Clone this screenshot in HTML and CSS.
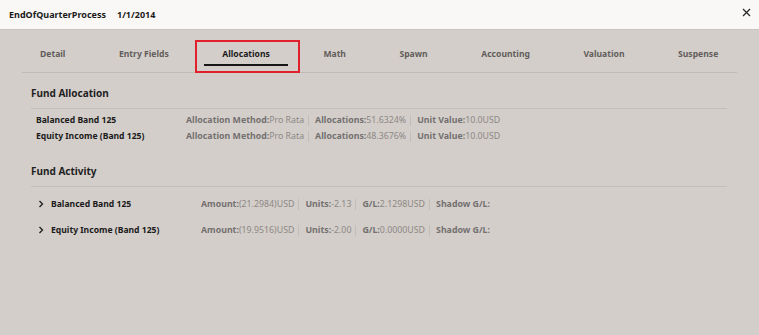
FILE: index.html
```html
<!DOCTYPE html>
<html>
<head>
<meta charset="utf-8">
<link rel="stylesheet" href="styles.css">
</head>
<body>
<div class="dialog">
  <header class="header">
    <div class="title"><span class="name">EndOfQuarterProcess</span><span class="date">1/1/2014</span></div>
    <button class="close" aria-label="Close">
      <svg width="9" height="9" viewBox="0 0 9 9"><path d="M1 1L8 8M8 1L1 8" stroke="#2a2a2a" stroke-width="1.3" fill="none"/></svg>
    </button>
  </header>
  <main class="body">
    <nav class="tabs">
      <div class="tab">Detail</div>
      <div class="tab">Entry Fields</div>
      <div class="tab active">Allocations</div>
      <div class="tab">Math</div>
      <div class="tab">Spawn</div>
      <div class="tab">Accounting</div>
      <div class="tab">Valuation</div>
      <div class="tab">Suspense</div>
    </nav>

    <section class="section">
      <h2 class="section-title">Fund Allocation</h2>
      <div class="alloc-list">
        <div class="alloc-row">
          <div class="fund">Balanced Band 125</div>
          <div class="details">
            <span class="item"><b>Allocation Method:</b>Pro Rata</span>
            <span class="item"><b>Allocations:</b>51.6324%</span>
            <span class="item"><b>Unit Value:</b>10.0USD</span>
          </div>
        </div>
        <div class="alloc-row">
          <div class="fund">Equity Income (Band 125)</div>
          <div class="details">
            <span class="item"><b>Allocation Method:</b>Pro Rata</span>
            <span class="item"><b>Allocations:</b>48.3676%</span>
            <span class="item"><b>Unit Value:</b>10.0USD</span>
          </div>
        </div>
      </div>
    </section>

    <section class="section activity">
      <h2 class="section-title">Fund Activity</h2>
      <div class="act-list">
        <div class="act-row">
          <svg class="chev" width="6" height="8" viewBox="0 0 6 8"><path d="M1.5 1L4.5 4L1.5 7" stroke="#1e1e1e" stroke-width="1.3" fill="none"/></svg>
          <div class="fund">Balanced Band 125</div>
          <div class="details">
            <span class="item"><b>Amount:</b>(21.2984)USD</span>
            <span class="item"><b>Units:</b>-2.13</span>
            <span class="item"><b>G/L:</b>2.1298USD</span>
            <span class="item"><b>Shadow G/L:</b></span>
          </div>
        </div>
        <div class="act-row">
          <svg class="chev" width="6" height="8" viewBox="0 0 6 8"><path d="M1.5 1L4.5 4L1.5 7" stroke="#1e1e1e" stroke-width="1.3" fill="none"/></svg>
          <div class="fund">Equity Income (Band 125)</div>
          <div class="details">
            <span class="item"><b>Amount:</b>(19.9516)USD</span>
            <span class="item"><b>Units:</b>-2.00</span>
            <span class="item"><b>G/L:</b>0.0000USD</span>
            <span class="item"><b>Shadow G/L:</b></span>
          </div>
        </div>
      </div>
    </section>
  </main>
</div>
</body>
</html>
```
FILE: styles.css
```css
* { box-sizing: border-box; }
html, body { margin: 0; padding: 0; }
body {
  width: 759px;
  height: 335px;
  overflow: hidden;
  background: #d3ceca;
  font-family: "Noto Sans", "Open Sans", sans-serif;
  color: #1b1b1b;
}
.dialog { display: flex; flex-direction: column; height: 335px; }
.header {
  height: 30px;
  background: #f9f8f6;
  border-bottom: 1px solid #c9c4c0;
  display: flex;
  align-items: center;
  justify-content: space-between;
  padding: 0 8px 0 9px;
}
.title { display: flex; gap: 11px; font-size: 9px; font-weight: 700; color: #1b1b1b; }
.close { background: none; border: 0; padding: 0; display: flex; margin-top: -4px; }
.body { flex: 1; padding: 0 22px; }
.tabs {
  display: flex;
  align-items: stretch;
  height: 43px;
  border-bottom: 1px solid #c0bbb7;
  padding-left: 18px;
  gap: 53.5px;
}
.tab {
  position: relative;
  display: flex;
  align-items: center;
  font-size: 8.6px;
  font-weight: 700;
  color: #625d5a;
  padding-top: 6px;
}
.tab.active { color: #1b1b1b; }
.tab.active::after {
  content: "";
  position: absolute;
  left: -18px;
  right: -18px;
  bottom: 6px;
  height: 2px;
  background: #161616;
}
.tab.active::before {
  content: "";
  position: absolute;
  left: -27px;
  right: -30px;
  top: 10px;
  bottom: -1px;
  border: 2px solid #e0202a;
}
.section { padding: 0 10px 0 9px; }
.section-title {
  margin: 0;
  font-size: 10px;
  font-weight: 700;
  color: #1f1f1f;
  height: 36px;
  display: flex;
  align-items: center;
  border-bottom: 1px solid #c3beba;
  padding-top: 4px;
}
.alloc-list { padding: 3px 0 0 5px; }
.alloc-row { display: flex; height: 16px; align-items: center; }
.alloc-row .fund { width: 150px; font-size: 8.6px; font-weight: 700; color: #1b1b1b; }
.details { display: flex; align-items: center; font-size: 8.8px; color: #8d8884; }
.details b { font-weight: 700; color: #747070; }
.item { padding: 0 4px 0 6px; border-left: 1px solid #c2bdb9; line-height: 11px; }
.item:first-child { border-left: 0; padding-left: 0; }
.activity { margin-top: 7px; }
.act-list { padding: 4px 0 0 7px; }
.act-row { display: flex; height: 26px; align-items: center; }
.act-row .chev { margin-right: 7px; }
.act-row .fund { width: 150px; font-size: 8.6px; font-weight: 700; color: #1b1b1b; }
```
